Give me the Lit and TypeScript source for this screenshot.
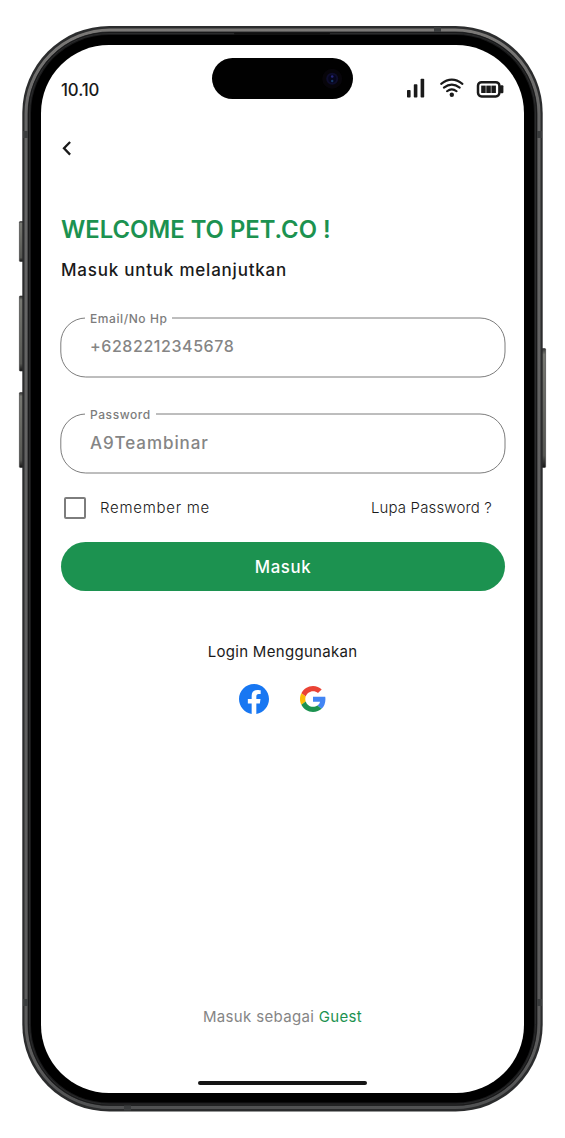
import { LitElement, html, css } from "lit";
import { customElement, property } from "lit/decorators.js";

@customElement("phone-frame")
class PhoneFrame extends LitElement {
  static styles = css`
    :host { position: absolute; inset: 0; display: block; }
    svg { display: block; }
  `;
  render() {
    return html`<svg width="565" height="1138" viewBox="0 0 565 1138" aria-hidden="true">
      <defs>
        <linearGradient id="key" x1="0" y1="0" x2="0" y2="1">
          <stop offset="0" stop-color="#333"/><stop offset=".05" stop-color="#777872"/>
          <stop offset=".9" stop-color="#555652"/><stop offset="1" stop-color="#161616"/>
        </linearGradient>
        <linearGradient id="rim" x1="0" y1="0" x2="0" y2="1">
          <stop offset="0" stop-color="#7b7977"/><stop offset=".08" stop-color="#666"/>
          <stop offset=".95" stop-color="#5c5c5c"/><stop offset="1" stop-color="#505152"/>
        </linearGradient>
      </defs>
      <g fill="url(#key)" stroke="#333" stroke-width=".6">
        <rect x="19.4" y="221.5" width="4" height="40" rx=".8"/>
        <rect x="19.4" y="296" width="4" height="75" rx=".8"/>
        <rect x="19.4" y="392.5" width="4" height="75" rx=".8"/>
        <rect x="541.6" y="348.5" width="4" height="119" rx=".8"/>
      </g>
      <rect x="22.3" y="26" width="520.4" height="1085.5" rx="87" fill="#2b2c2d"/>
      <rect x="26" y="30" width="513" height="1077.6" rx="84" fill="none" stroke="url(#rim)" stroke-width="3"/>
      <rect x="28" y="32" width="509" height="1073.6" rx="81" fill="#19191a"/>
      <rect x="29.5" y="33.5" width="506" height="1070.6" rx="79.5" fill="none" stroke="#2a2b2c" stroke-width="1"/>
      <rect x="31" y="35" width="503" height="1067.6" rx="78" fill="#000"/>
      <rect x="234" y="32.7" width="96" height="2" rx="1" fill="#111"/>
      <g fill="#3b3d3e">
        <rect x="23" y="131" width="5" height="7"/><rect x="537" y="131" width="5" height="7"/>
        <rect x="23" y="999" width="5" height="7"/><rect x="537" y="999" width="5" height="7"/>
        <rect x="434" y="27" width="7" height="5"/><rect x="124" y="1105.5" width="7" height="5"/>
      </g>
    </svg>`;
  }
}

@customElement("status-bar")
class StatusBar extends LitElement {
  static styles = css`
    :host { display: flex; height: 61px; padding: 13px 20px 0 20px; box-sizing: border-box; }
    .time { width: 39px; flex: none; font-size: 16.8px; line-height: 24px; font-weight: 500; letter-spacing: -0.1px; padding-top: 20px; }
    .island { width: 141px; height: 41px; flex: none; margin-left: 112px; }
    .icons { width: 98px; height: 24px; margin-top: 18px; flex: none; margin-left: 53px; }
    svg { display: block; }
  `;
  render() {
    return html`
      <div class="time">10.10</div>
      <svg class="island" viewBox="0 0 141 41">
        <rect width="141" height="41" rx="20.5" fill="#010101"/>
        <circle cx="120.2" cy="20.7" r="10" fill="#07050a"/>
        <circle cx="120.2" cy="20.7" r="6" fill="#0e0d2c"/>
        <circle cx="120.2" cy="20.7" r="4" fill="#06061c"/>
        <circle cx="120.2" cy="18.5" r="1.3" fill="#26267a"/>
        <circle cx="120.2" cy="23" r="1.2" fill="#163b6b"/>
      </svg>
      <svg class="icons" viewBox="406 76 98 24">
        <g fill="#1a1a1a">
          <rect x="407" y="90" width="3.6" height="7.5" rx=".8"/>
          <rect x="413.8" y="84.2" width="3.6" height="13.3" rx=".8"/>
          <rect x="420.6" y="78.8" width="3.6" height="18.7" rx=".8"/>
          <circle cx="451.8" cy="94.8" r="2.2"/>
          <rect x="500" y="85.2" width="3.4" height="8" rx="1"/>
          <rect x="481.2" y="85.6" width="4.5" height="7.4"/>
          <rect x="486.3" y="85.6" width="4.5" height="7.4"/>
          <rect x="491.4" y="85.6" width="4.5" height="7.4"/>
        </g>
        <g fill="none" stroke="#1a1a1a" stroke-width="2.1" stroke-linecap="round">
          <path d="M441.2 83.8Q451.8 75.6 462.4 83.8"/>
          <path d="M443.9 87.7Q451.8 81.5 459.7 87.7"/>
          <path d="M447 91.2Q451.8 87.4 456.6 91.2"/>
          <rect x="478" y="82.2" width="21.4" height="14.2" rx="3.6" stroke-width="2.5"/>
        </g>
      </svg>`;
  }
}

@customElement("outlined-field")
class OutlinedField extends LitElement {
  @property() label = "";
  @property() value = "";
  static styles = css`
    :host { display: block; position: relative; height: 62px; padding: 18px 0 0 30px; box-sizing: border-box; }
    .outline { position: absolute; left: 0; top: 0; display: block; }
    .label { position: absolute; left: 25px; top: -6px; background: #fff; padding: 0 5px 0 5px; font-size: 12px; line-height: 17px; font-weight: 500; color: #7c7c7c; letter-spacing: 0.58px; }
    .value { position: relative; font-size: 16px; line-height: 24px; font-weight: 500; color: #858585; letter-spacing: 0.57px; }
    .value.secret { font-size: 17px; line-height: 26px; letter-spacing: 0.92px; }
  `;
  render() {
    return html`
      <svg class="outline" width="446" height="62" viewBox="0 0 446 62"><rect x=".8" y="2" width="444.2" height="59" rx="25" fill="none" stroke="#7d7d7d"/></svg>
      <div class="label">${this.label}</div>
      <div class="value ${this.label === "Password" ? "secret" : ""}">${this.value}</div>`;
  }
}

@customElement("app-root")
class AppRoot extends LitElement {
  static styles = css`
    :host { display: block; position: relative; width: 565px; height: 1138px; background: #fff; overflow: hidden; font-family: Inter, sans-serif; color: #1a1a1a; padding: 45px 41px; box-sizing: border-box; }
    .screen { position: relative; width: 483px; height: 1048px; border-radius: 68px; background: #fff; overflow: hidden; display: flex; flex-direction: column; }
    .content { padding: 0 19px 0 19px; display: flex; flex-direction: column; flex: 1; }
    .back { display: block; width: 14px; height: 20px; margin-top: 32px; }
    h1 { margin: 56px 0 0 1px; font-size: 23.8px; line-height: 32px; font-weight: 600; color: #1c9250; white-space: nowrap; letter-spacing: 0; }
    .sub { margin: 12px 0 0 1px; font-size: 17px; line-height: 24px; font-weight: 500; letter-spacing: 0.78px; }
    .email { margin-top: 34px; }
    .password { margin-top: 34px; }
    .options { display: flex; align-items: center; margin-top: 23px; height: 22px; padding: 0 13px 0 4px; font-weight: 300; font-size: 15px; line-height: 20px; }
    .box { width: 22px; height: 22px; box-sizing: border-box; border: 2px solid #7d7d7d; border-radius: 2px; margin-right: 14px; }
    .remember { letter-spacing: 0.72px; }
    .lupa { margin-left: auto; letter-spacing: 0.15px; }
    .cta { margin: 23px 0 0 1px; height: 49px; border: 0; border-radius: 25px; background: #1c9250; color: #fff; font: 500 16.8px/47px Inter, sans-serif; letter-spacing: 0.6px; padding: 2px 0 0; }
    .with { margin-top: 51px; line-height: 20px; font-size: 15px; letter-spacing: 0.3px; text-align: center; }
    .social { display: flex; justify-content: center; align-items: center; gap: 31px; margin-top: 22px; height: 30px; }
    .guest { margin-top: auto; margin-bottom: 54px; line-height: 20px; font-size: 15px; letter-spacing: 0.34px; text-align: center; color: #858585; }
    .guest b { font-weight: 400; color: #1c9250; }
    .home { width: 169px; height: 4px; border-radius: 2px; background: #151515; margin: 0 auto 8px 157px; }
  `;
  render() {
    return html`
      <phone-frame></phone-frame>
      <main class="screen">
        <status-bar></status-bar>
        <section class="content">
          <svg class="back" viewBox="0 0 14 20"><path d="M10.1 4L4 10.3L10.1 16.6" fill="none" stroke="#1a1a1a" stroke-width="2.3"/></svg>
          <h1>WELCOME TO PET.CO !</h1>
          <div class="sub">Masuk untuk melanjutkan</div>
          <outlined-field class="email" label="Email/No Hp" value="+6282212345678"></outlined-field>
          <outlined-field class="password" label="Password" value="A9Teambinar"></outlined-field>
          <div class="options"><span class="box"></span><span class="remember">Remember me</span><span class="lupa">Lupa Password ?</span></div>
          <button class="cta">Masuk</button>
          <div class="with">Login Menggunakan</div>
          <div class="social">
            <svg width="30" height="30" viewBox="0 0 24 24"><path fill="#1877f2" d="M24 12.07C24 5.4 18.63 0 12 0S0 5.4 0 12.07C0 18.1 4.39 23.1 10.13 24v-8.44H7.08v-3.49h3.05V9.41c0-3.02 1.79-4.69 4.53-4.69 1.31 0 2.68.24 2.68.24v2.97h-1.51c-1.49 0-1.96.93-1.96 1.89v2.25h3.33l-.53 3.49h-2.8V24C19.61 23.1 24 18.1 24 12.07z"/></svg>
            <svg width="26" height="26" viewBox="0 0 48 48">
              <path fill="#ea4335" d="M24 9.5c3.54 0 6.71 1.22 9.21 3.6l6.85-6.85C35.9 2.38 30.47 0 24 0 14.62 0 6.51 5.38 2.56 13.22l7.98 6.19C12.43 13.72 17.74 9.5 24 9.5z"/>
              <path fill="#4285f4" d="M46.98 24.55c0-1.57-.15-3.09-.38-4.55H24v9.02h12.94c-.58 2.96-2.26 5.48-4.78 7.18l7.73 6c4.51-4.18 7.09-10.36 7.09-17.65z"/>
              <path fill="#fbbc05" d="M10.53 28.59c-.48-1.45-.76-2.99-.76-4.59s.27-3.14.76-4.59l-7.98-6.19C.92 16.46 0 20.12 0 24c0 3.88.92 7.54 2.56 10.78l7.97-6.19z"/>
              <path fill="#1c9250" d="M24 48c6.48 0 11.93-2.13 15.89-5.81l-7.73-6c-2.15 1.45-4.92 2.3-8.16 2.3-6.26 0-11.57-4.22-13.47-9.91l-7.98 6.19C6.51 42.62 14.62 48 24 48z"/>
            </svg>
          </div>
          <div class="guest">Masuk sebagai <b>Guest</b></div>
        </section>
        <div class="home"></div>
      </main>`;
  }
}
